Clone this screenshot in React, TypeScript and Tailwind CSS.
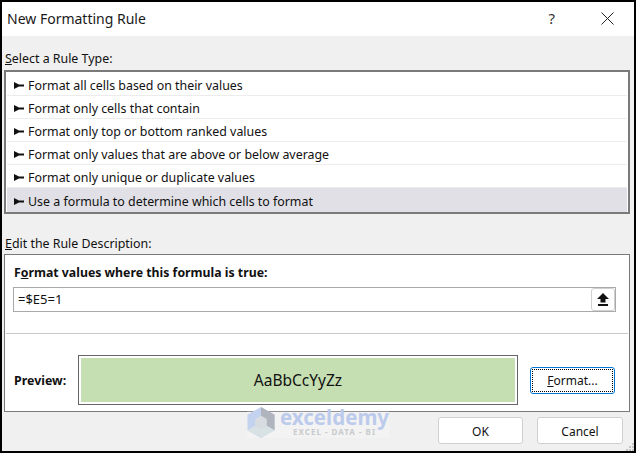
import React from "react";

const font = { fontFamily: '"Noto Sans", "Open Sans", sans-serif' };

const rules = [
  "Format all cells based on their values",
  "Format only cells that contain",
  "Format only top or bottom ranked values",
  "Format only values that are above or below average",
  "Format only unique or duplicate values",
  "Use a formula to determine which cells to format",
];

function Bullet() {
  return (
    <svg width="10" height="7" viewBox="0 0 10 7" className="mt-[2px] shrink-0">
      <path d="M0 0 L5 2.500 L10 2.500 L10 4.500 L5 4.500 L0 7 Z" fill="#111" />
    </svg>
  );
}

function Watermark() {
  return (
    <div className="pointer-events-none absolute left-[245px] top-[405px] flex h-[31px] w-[142px] items-start gap-[5px] bg-white/20">
      <svg width="28" height="31" viewBox="0 0 28 32" className="shrink-0">
        <path d="M14 0 L28 8 L28 24 L14 32 L0 24 L0 8 Z" fill="#c3d2ee" />
        <path d="M14 0 L28 8 L28 24 L14 16 Z" fill="#a9a9ab" opacity="0.75" />
        <path d="M0 24 L14 16 L28 24 L14 32 Z" fill="#d8e2e4" />
        <path d="M14 9 L20 12.500 L20 19.500 L14 23 L8 19.500 L8 12.500 Z" fill="#d8dbe0" />
      </svg>
      <div className="flex flex-col items-center leading-none">
        <span className="text-[20.500px] font-bold leading-[20px] text-[#bccbec]">exceldemy</span>
        <span className="text-[8px] font-bold leading-[9px] tracking-[1px] text-[#c8cacc]">EXCEL - DATA - BI</span>
      </div>
    </div>
  );
}

export default function App() {
  return (
    <div className="relative flex h-[453px] w-[636px] flex-col overflow-hidden border-2 border-black bg-[#f0f0f0] text-[12.4px] text-[#111]" style={font}>
      {/* title bar */}
      <div className="flex h-[34px] shrink-0 items-center bg-white pb-[2px] pl-[5px]">
        <span className="flex-1 text-[14px] text-[#1a1a1a]">New Formatting Rule</span>
        <span className="mr-[46px] text-[15px] text-[#333]">?</span>
        <svg width="13" height="13" viewBox="0 0 13 13" className="mr-[20px]">
          <path d="M0.500 0.500 L12.500 12.500 M12.500 0.500 L0.500 12.500" stroke="#222" strokeWidth="1" />
        </svg>
      </div>

      <div className="flex h-[34px] shrink-0 items-end pb-[1px] pl-[3px]">
        <span><span className="underline">S</span>elect a Rule Type:</span>
      </div>

      {/* rule list */}
      <div className="ml-[2px] mr-[4px] flex h-[144px] shrink-0 flex-col border-2 border-[#7a7a7a] bg-white px-[1px] pt-[1px]">
        {rules.map((r, i) => (
          <div
            key={r}
            className={`flex shrink-0 items-center gap-[4px] pl-[7px] ${i === 5 ? "h-[24px] bg-[#e0e0e6]" : "h-[23px] border-b border-[#ececec]"}`}
          >
            <Bullet />
            <span className="pt-[4px]">{r}</span>
          </div>
        ))}
      </div>

      <div className="flex h-[40px] shrink-0 items-end pl-[3px]">
        <span><span className="underline">E</span>dit the Rule Description:</span>
      </div>

      {/* description */}
      <div className="ml-[2px] mr-[4px] flex h-[158px] shrink-0 flex-col border border-[#7a7a7a] bg-white">
        <div className="h-[32px] shrink-0 pl-[9px] pt-[9px] text-[12.300px] font-bold leading-[18px]">
          F<span className="underline">o</span>rmat values where this formula is true:
        </div>
        <div className="ml-[8px] mr-[13px] flex h-[25px] shrink-0 items-center justify-between border border-[#a9a9a9] pl-[4px]">
          <span className="text-[13px]">=$E5=1</span>
          <div className="flex h-[23px] w-[24px] items-center justify-center rounded-[3px] border border-[#d0d0d0] bg-white">
            <svg width="12" height="13" viewBox="0 0 12 13">
              <path d="M6 0 L12 6 L8.500 6 L8.500 9.500 L3.500 9.500 L3.500 6 L0 6 Z" fill="#111" />
              <rect x="1" y="11" width="10" height="2" fill="#111" />
            </svg>
          </div>
        </div>
        <div className="mx-[1px] mt-[21px] h-px shrink-0 bg-[#c8c8c8]" />
        <div className="flex flex-1 items-start pl-[9px] pt-[21px]">
          <span className="mt-[17px] w-[64px] font-bold leading-[18px]">Preview:</span>
          <div className="h-[50px] w-[440px] border border-[#666] bg-white p-[2px]">
            <div className="flex h-full items-center justify-center bg-[#c6dfb2] pt-[2px] text-[15.500px] text-[#111]">AaBbCcYyZz</div>
          </div>
          <button className="ml-[12px] mt-[12px] flex h-[27px] w-[85px] items-center justify-center rounded-[3px] border border-[#0078d7] bg-white p-px">
            <span className="flex h-full w-full items-center justify-center border border-dotted border-black">
              <span className="text-[12px]"><span className="underline">F</span>ormat...</span>
            </span>
          </button>
        </div>
      </div>

      {/* footer */}
      <div className="mr-[11px] mt-[5px] flex justify-end gap-[14px]">
        <button className="h-[27px] w-[85px] rounded-[3px] border border-[#d0d0d0] bg-white pt-[2px] text-[12px]">OK</button>
        <button className="h-[27px] w-[86px] rounded-[3px] border border-[#d0d0d0] bg-white pt-[2px] text-[12px]">Cancel</button>
      </div>

      <Watermark />

      {/* resize grip */}
      <div className="absolute bottom-0 right-0 grid grid-cols-3 gap-px">
        <span className="h-[2px] w-[2px]" />
        <span className="h-[2px] w-[2px]" />
        <span className="h-[2px] w-[2px] bg-[#c4c4c4]" />
        <span className="h-[2px] w-[2px]" />
        <span className="h-[2px] w-[2px] bg-[#c4c4c4]" />
        <span className="h-[2px] w-[2px] bg-[#c4c4c4]" />
        <span className="h-[2px] w-[2px] bg-[#c4c4c4]" />
        <span className="h-[2px] w-[2px] bg-[#c4c4c4]" />
        <span className="h-[2px] w-[2px] bg-[#c4c4c4]" />
      </div>
    </div>
  );
}
